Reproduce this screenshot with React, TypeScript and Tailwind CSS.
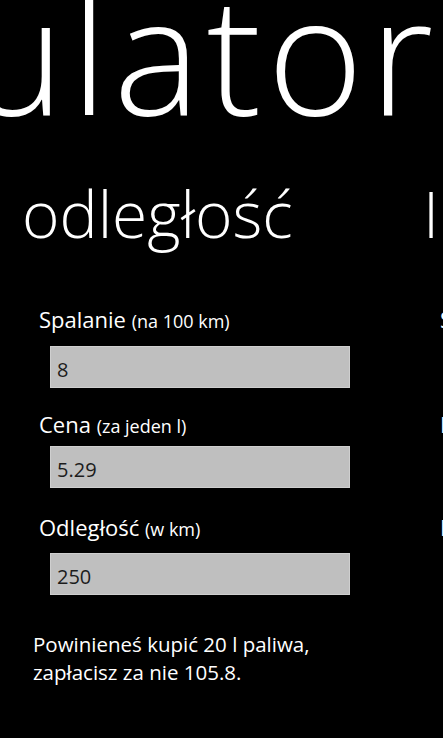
const font = { fontFamily: '"Open Sans", "Noto Sans", sans-serif' };

type Field = { label: string; hint: string; value: string; gap: string; boxGap: string };

const fields: Field[] = [
  { label: "Spalanie", hint: "(na 100 km)", value: "8", gap: "mt-[60px]", boxGap: "mt-[13px]" },
  { label: "Cena", hint: "(za jeden l)", value: "5.29", gap: "mt-[22px]", boxGap: "mt-[8px]" },
  { label: "Odległość", hint: "(w km)", value: "250", gap: "mt-[25px]", boxGap: "mt-[12px]" },
];

const fields2: Field[] = [
  { label: "Spalanie", hint: "(na 100 km)", value: "8", gap: "mt-[60px]", boxGap: "mt-[13px]" },
  { label: "Kwota", hint: "(w zł)", value: "100", gap: "mt-[22px]", boxGap: "mt-[8px]" },
  { label: "Ilość", hint: "(w l)", value: "20", gap: "mt-[25px]", boxGap: "mt-[12px]" },
];

function Section({
  title,
  items,
  result,
}: {
  title: string;
  items: Field[];
  result?: string[];
}) {
  return (
    <div className="w-[401px] shrink-0">
      <div className="pl-[22px] text-[64px] leading-[62px] font-light whitespace-nowrap">
        {title}
      </div>
      {items.map((f) => (
        <div key={f.label} className={f.gap}>
          <div className="pl-[39px] h-[28px] text-[22px] leading-[28px] whitespace-nowrap">
            {f.label} <span className="text-[18px] leading-[20px]">{f.hint}</span>
          </div>
          <div
            className={`${f.boxGap} ml-[50px] w-[300px] h-[42px] bg-[#bfbfbf] border border-[#cfcfcf] overflow-hidden px-[6px] pt-[5px] text-[20px] leading-[36px] text-[#1c1c1c]`}
          >
            {f.value}
          </div>
        </div>
      ))}
      {result && (
        <div className="mt-[35px] pl-[33px] text-[20.5px] leading-[28px]">
          {result.map((line) => (
            <div key={line} className="whitespace-nowrap">
              {line}
            </div>
          ))}
        </div>
      )}
    </div>
  );
}

export default function App() {
  return (
    <div className="w-[443px] h-[738px] overflow-hidden bg-black text-white" style={font}>
      <div className="mt-[-30px] ml-[-339px] text-[164px] leading-[164px] tracking-[6px] font-light whitespace-nowrap">
        kalkulator
      </div>
      <div className="mt-[49px] flex">
        <Section
          title="odległość"
          items={fields}
          result={["Powinieneś kupić 20 l paliwa,", "zapłacisz za nie 105.8."]}
        />
        <Section title="Ilość paliwa" items={fields2} />
      </div>
    </div>
  );
}
